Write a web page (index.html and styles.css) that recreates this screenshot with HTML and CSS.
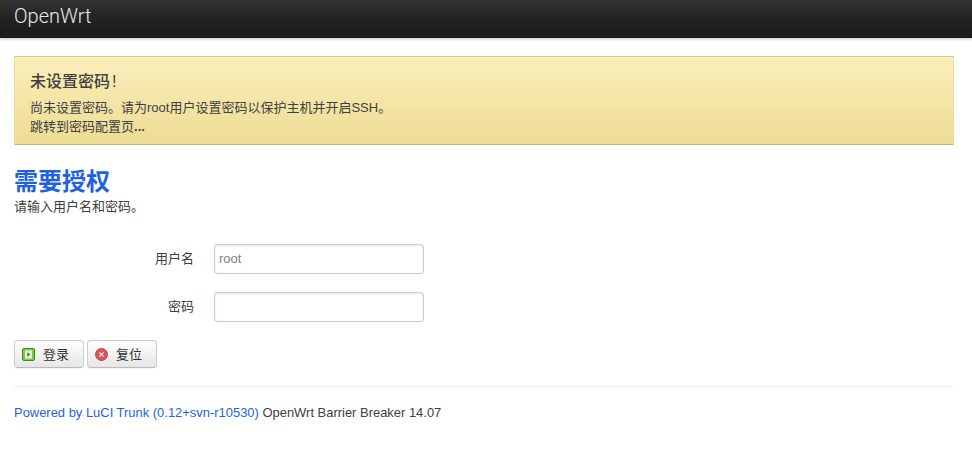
FILE: index.html
```html
<!DOCTYPE html>
<html lang="zh-CN">
<head>
<meta charset="utf-8">
<title>OpenWrt - LuCI</title>
<link rel="stylesheet" href="styles.css">
</head>
<body>
<header class="topbar"><a class="brand" href="#">OpenWrt</a></header>
<main class="container">
  <div class="alert">
    <h4 class="alert-title">未设置密码<span class="alert-mark">!</span></h4>
    <p class="alert-text">尚未设置密码。请为root用户设置密码以保护主机并开启SSH。</p>
    <a class="alert-link" href="#">跳转到密码配置页<b>...</b></a>
  </div>
  <h2 class="page-title">需要授权</h2>
  <p class="page-desc">请输入用户名和密码。</p>
  <form class="login-form">
    <div class="field">
      <label class="field-label" for="u">用户名</label>
      <input class="field-input" id="u" type="text" value="root">
    </div>
    <div class="field">
      <label class="field-label" for="p">密码</label>
      <input class="field-input" id="p" type="password">
    </div>
    <div class="actions">
      <button class="btn" type="button">
        <svg class="btn-icon" viewBox="0 0 13 13" width="13" height="13"><rect x="0.5" y="0.5" width="12" height="12" rx="1.5" fill="#7cc84a" stroke="#3f8a1e"/><rect x="3" y="2.5" width="7" height="8" fill="#e4f4d0"/><path d="M5.2 4.3 8.4 6.5 5.2 8.7z" fill="#3f8a1e"/></svg>
        <span class="btn-text">登录</span>
      </button>
      <button class="btn" type="button">
        <svg class="btn-icon" viewBox="0 0 13 13" width="13" height="13"><circle cx="6.5" cy="6.5" r="6" fill="#d9545c" stroke="#b5474f"/><path d="M4.5 4.5 8.5 8.5M8.5 4.5 4.5 8.5" stroke="#fbe3e3" stroke-width="1.1"/></svg>
        <span class="btn-text">复位</span>
      </button>
    </div>
  </form>
  <footer class="footer"><a href="#">Powered by LuCI Trunk (0.12+svn-r10530)</a> OpenWrt Barrier Breaker 14.07</footer>
</main>
</body>
</html>
```
FILE: styles.css
```css
* { box-sizing: border-box; }
html, body { margin: 0; padding: 0; }
body {
  background: #fff;
  color: #404040;
  font-family: "Liberation Sans", "Noto Sans CJK SC", sans-serif;
  font-size: 13px;
  line-height: 18px;
}
a { text-decoration: none; }
.topbar {
  height: 38px;
  background: linear-gradient(#333333, #222222 50%, #1b1b1b);
  box-shadow: 0 1px 3px rgba(0,0,0,.25);
  padding-left: 14px;
}
.brand {
  display: block;
  color: #e8e8e8;
  font-family: Roboto, "Liberation Sans", sans-serif;
  font-size: 20px;
  font-weight: 300;
  line-height: 32px;
}
.container { padding: 18px 18px 0 14px; }
.alert {
  height: 89px;
  padding: 14px 15px 0;
  background: linear-gradient(#fbeebb, #eedc94);
  border: 1px solid #eedc94;
  border-top-color: #d8c77f;
  border-bottom-color: #c8b670;
  color: #404040;
  box-shadow: inset 0 1px 0 rgba(255,255,255,.25);
}
.alert-title { margin: 0 0 6px; font-size: 16px; line-height: 21px; font-weight: 500; }
.alert-mark { margin-left: 2px; font-weight: 400; }
.alert-text { margin: 0; font-size: 13px; line-height: 19px; }
.alert-link { display: block; font-size: 13px; line-height: 20px; color: #404040; }
.page-title { margin: 21px 0 0; color: #1f62e0; font-size: 24px; line-height: 32px; font-weight: 700; }
.page-desc { margin: 0; font-size: 13px; line-height: 18px; }
.login-form { margin-top: 28px; }
.field { display: flex; align-items: center; height: 30px; margin-bottom: 18px; }
.field-label { width: 180px; text-align: right; font-size: 13px; color: #404040; }
.field-input {
  width: 210px;
  height: 30px;
  margin-left: 20px;
  padding: 3px 4px 5px;
  border: 1px solid #ccc;
  border-radius: 3px;
  box-shadow: inset 0 1px 3px rgba(0,0,0,.1);
  color: #808080;
  font: 13px "Liberation Sans", sans-serif;
  outline: none;
}
.actions { display: flex; gap: 3px; }
.btn {
  display: flex;
  align-items: center;
  width: 70px;
  height: 28px;
  padding: 0 0 0 7px;
  background: linear-gradient(#ffffff, #e6e6e6);
  border: 1px solid #ccc;
  border-bottom-color: #bbb;
  border-radius: 4px;
  box-shadow: 0 1px 2px rgba(0,0,0,.05);
  color: #333;
  font: 13px "Liberation Sans", "Noto Sans CJK SC", sans-serif;
}
.btn-icon { flex: none; margin-right: 8px; }
.btn-text { margin-bottom: 2px; }
.footer {
  margin-top: 18px;
  padding-top: 17px;
  border-top: 1px solid #eee;
  font-size: 12.94px;
  line-height: 18px;
  color: #404040;
}
.footer a { color: #1f62e0; }
```
